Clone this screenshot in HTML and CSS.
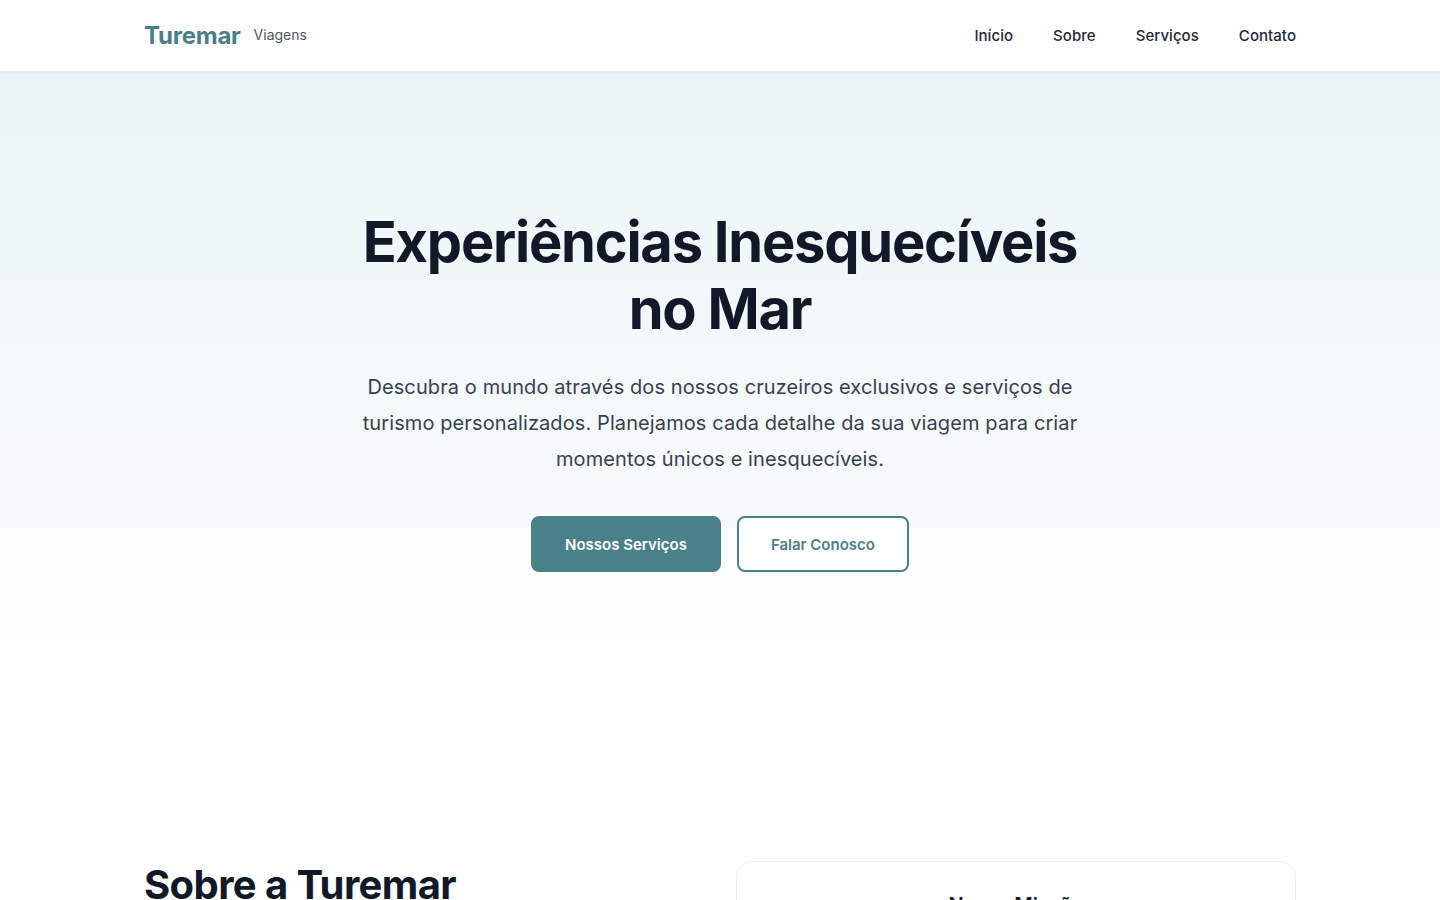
FILE: index.html
```html
<!DOCTYPE html>
<html lang="pt-BR">
<head>
<meta charset="utf-8">
<title>Turemar Viagens</title>
<link rel="stylesheet" href="styles.css">
</head>
<body>
<header class="site-header">
  <div class="container header-inner">
    <a class="brand" href="#">
      <span class="brand-name">Turemar</span>
      <span class="brand-sub">Viagens</span>
    </a>
    <nav class="nav">
      <a href="#">Início</a>
      <a href="#">Sobre</a>
      <a href="#">Serviços</a>
      <a href="#">Contato</a>
    </nav>
  </div>
</header>
<main>
  <section class="hero">
    <div class="container hero-inner">
      <h1 class="hero-title">Experiências Inesquecíveis no Mar</h1>
      <p class="hero-text">Descubra o mundo através dos nossos cruzeiros exclusivos e serviços de turismo personalizados. Planejamos cada detalhe da sua viagem para criar momentos únicos e inesquecíveis.</p>
      <div class="hero-actions">
        <a class="btn btn-primary" href="#">Nossos Serviços</a>
        <a class="btn btn-outline" href="#">Falar Conosco</a>
      </div>
    </div>
  </section>
  <section class="about">
    <div class="container about-grid">
      <div class="about-text">
        <h2 class="section-title">Sobre a Turemar</h2>
      </div>
      <div class="card">
        <h3 class="card-title">Nossa Missão</h3>
      </div>
    </div>
  </section>
</main>
</body>
</html>
```
FILE: styles.css
```css
* { box-sizing: border-box; }
html, body { margin: 0; padding: 0; }
body {
  font-family: Inter, "Noto Sans", sans-serif;
  color: #111827;
  background: #ffffff;
}
a { text-decoration: none; color: inherit; }
.container { width: 1152px; margin: 0 auto; }

.site-header {
  background: #ffffff;
  border-bottom: 1px solid #e5e7eb;
  box-shadow: 0 1px 2px rgba(0,0,0,0.04);
  position: relative;
  z-index: 2;
}
.header-inner {
  height: 71px;
  display: flex;
  align-items: center;
  justify-content: space-between;
}
.brand { display: flex; align-items: center; gap: 13px; }
.brand-name { font-size: 24px; font-weight: 700; color: #4a7f87; letter-spacing: -0.01em; }
.brand-sub { font-size: 14px; color: #4b5563; margin-top: -2px; }
.nav { display: flex; gap: 40px; }
.nav a { font-size: 15px; font-weight: 500; color: #1f2937; letter-spacing: 0.05px; }

.hero {
  background: linear-gradient(180deg, #eaf4f6 0%, #ffffff 100%);
  padding: 137px 0 128px;
}
.hero-inner { display: flex; flex-direction: column; align-items: center; text-align: center; }
.hero-title {
  margin: 0;
  max-width: 768px;
  font-size: 56px;
  line-height: 1.2;
  font-weight: 700;
  letter-spacing: -0.022em;
  color: #111827;
}
.hero-text {
  margin: 26px 0 0;
  max-width: 768px;
  font-size: 20px;
  line-height: 36px;
  letter-spacing: 0.1px;
  color: #374151;
}
.hero-actions { display: flex; gap: 16px; margin-top: 39px; }
.btn {
  display: inline-flex;
  align-items: center;
  justify-content: center;
  height: 56px;
  padding: 0 32px;
  border: 2px solid #4a8088;
  border-radius: 8px;
  font-size: 15px;
  font-weight: 600;
}
.btn-primary { background: #4a8088; color: #ffffff; }
.btn-outline { color: #4a8088; background: #ffffff; }

.about { padding: 161px 0 96px; }
.about-grid { display: grid; grid-template-columns: 1fr 1fr; gap: 32px; align-items: start; }
.section-title { margin: 0; font-size: 40px; line-height: 48px; font-weight: 700; letter-spacing: -0.015em; color: #111827; }
.card {
  border: 1px solid #ececec;
  border-radius: 16px;
  padding: 29px 32px;
  background: #ffffff;
  min-height: 300px;
  text-align: center;
}
.card-title { margin: 0; font-size: 20px; line-height: 28px; font-weight: 600; color: #111827; }
```
